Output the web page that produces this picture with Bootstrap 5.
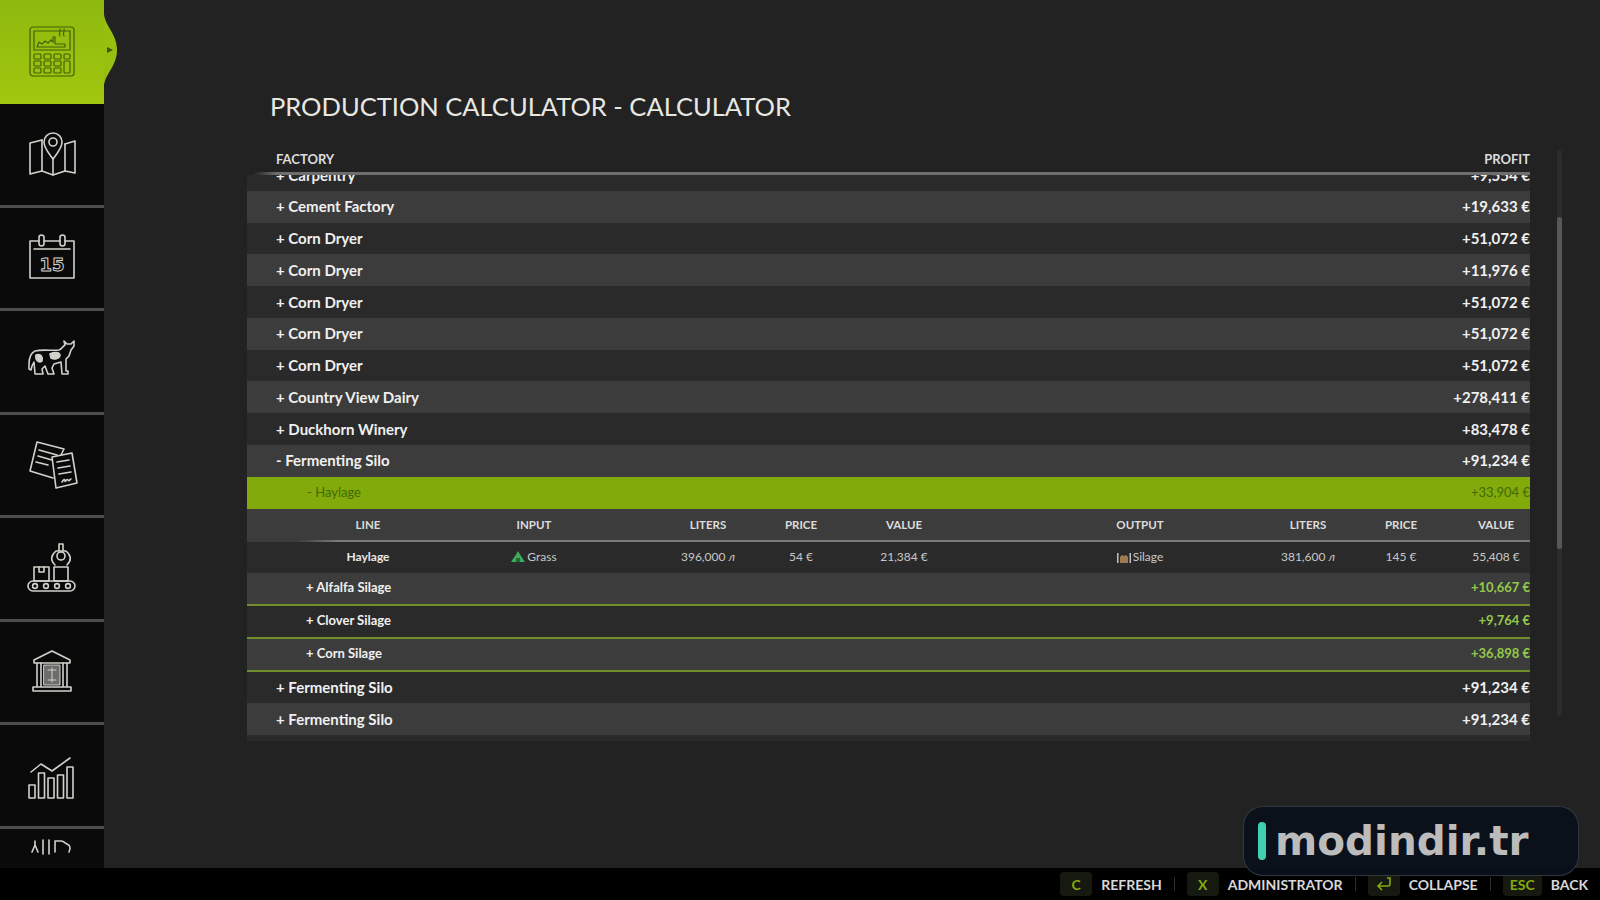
<!DOCTYPE html>
<html lang="en">
  <head>
    <meta charset="UTF-8" />
    <title>Production Calculator</title>
    <link rel="stylesheet" href="https://cdn.jsdelivr.net/npm/bootstrap@5.3.0/dist/css/bootstrap.min.css" />
    <style>
      body {
        height: 100vh;
        background: #222222;
        font-family: "Lato", "Liberation Sans", sans-serif;
        color: #eeeeee;
      }

      .side-menu { width: 104px; background: #0a0a0a; }
      .side-item { height: 103.5px; border-bottom: 3px solid #4d4d4d; }
      .side-item svg { width: 52px; height: 52px; fill: none; stroke: #d2d2cc; stroke-width: 1.6; stroke-linejoin: round; stroke-linecap: round; }
      .side-active { height: 104px; background: linear-gradient(180deg, #8db80e, #a2c70f); border-bottom: 0; }
      .side-active svg.calc-icon { stroke: #41610a; stroke-width: 1.2; }
      .side-notch { position: absolute; left: 104px; top: 14px; width: 14px; height: 72px; }
      .side-last { height: 60px; border-bottom: 0; padding-top: 9px; }

      .page-title { font-size: 25.5px; font-weight: 400; color: #e8e8e2; padding: 90px 0 0 23px; margin: 0 0 24px; line-height: 33px; }

      .calc-panel { width: 1283px; }
      .calc-head { padding: 0 0 0 29px; height: 25px; font-size: 13px; font-weight: 700; color: #dddddd; }
      .fade-line { height: 3px; background: linear-gradient(90deg, transparent 6px, #6e6e6e 30px, #6e6e6e 100%); }
      .calc-list { height: 566px; }
      .calc-inner { margin-top: -16px; }

      .calc-row { height: 31.75px; padding-left: 29px; font-size: 15px; font-weight: 700; color: #f0f0f0; }
      .row-light { background: #3c3c3c; }
      .row-dark { background: #2a2a2a; }
      .row-active { background: #82aa0a; color: #3f6a05; font-size: 13px; font-weight: 400; padding-left: 60px; height: 32px; }
      .row-sub { padding-left: 59px; font-size: 13px; height: 31px; }
      .row-sub .amount { color: #93c94a; }
      .row-ruled { height: 33px; border-bottom: 2px solid #708f2a; }
      .row-tail { height: 12px; }

      .cells { height: 31px; font-size: 12px; }
      .cells > div { text-align: center; flex: none; }
      .cells-head { height: 33px; font-size: 11.5px; font-weight: 700; color: #dcdcdc; background-image: linear-gradient(90deg, transparent 50px, #7a7a7a 90px, #7a7a7a 100%); background-size: 100% 2px; background-position: bottom; background-repeat: no-repeat; }
      .cells-body { color: #c8c8c8; }
      .cells-body > div:first-child { color: #e8e8e8; font-weight: 700; }
      .col-line { width: 120px; margin-left: 61px; }
      .col-input { width: 150px; margin-left: 31px; }
      .col-liters { width: 90px; margin-left: 54px; }
      .col-price { width: 70px; margin-left: 13px; }
      .col-value { width: 90px; margin-left: 23px; }
      .col-output { width: 150px; margin-left: 116px; }
      .col-liters2 { width: 90px; margin-left: 48px; }
      .col-price2 { width: 70px; margin-left: 13px; }
      .col-value2 { width: 68px; margin-left: 26px; }
      .good-icon { width: 14px; height: 14px; margin-right: 2px; vertical-align: -3px; }

      .scroll-track { width: 5px; height: 566px; margin: 3px 0 0 27px; background: #2c2c2c; border-radius: 3px; }
      .scroll-thumb { height: 332px; margin-top: 67px; background: #585858; border-radius: 3px; }

      .key-bar { height: 32px; background: #000000; padding-right: 12px; font-size: 14px; font-weight: 700; color: #d8d8d8; }
      .key-cap { height: 24px; min-width: 32px; padding: 0 7px; margin-right: 9px; background: #15190f; border-radius: 4px; color: #85aa10; font-size: 14px; }
      .key-gap { width: 1px; height: 14px; margin: 0 12px; background: #2d2d2d; }

      .site-mark { position: absolute; left: 1243px; top: 806px; width: 336px; height: 70px; background: rgba(10, 16, 26, 0.93); border: 1px solid rgba(255, 255, 255, 0.16); border-radius: 20px; padding-left: 14px; gap: 9px; }
      .site-bar { width: 8px; height: 38px; background: #3fd0b0; border-radius: 4px; }
      .site-text { font-family: "DejaVu Sans", sans-serif; font-size: 40.5px; font-weight: 700; color: #bcbcbc; line-height: 1; }
    </style>
  </head>
  <body class="d-flex flex-column overflow-hidden position-relative">
    <div class="d-flex flex-grow-1 overflow-hidden">
      <nav class="side-menu flex-shrink-0 overflow-hidden">
        <div class="side-item side-active d-flex align-items-center justify-content-center">
          <svg class="calc-icon" viewBox="0 0 52 52">
            <rect x="4" y="1" width="44" height="49" rx="3" />
            <rect x="8" y="5" width="36" height="19" />
            <path d="M11 21l2-5 3 2 3-3 3 2 3-3 2 2v-5h2v7h10v3z" />
            <path d="M34 10c-2-3 1-4 0-7M38 10c-2-3 1-4 0-7" />
            <rect x="8" y="28" width="7" height="5" rx="1" /><rect x="18" y="28" width="7" height="5" rx="1" /><rect x="28" y="28" width="7" height="5" rx="1" /><rect x="38" y="28" width="6" height="5" rx="1" />
            <rect x="8" y="35" width="7" height="5" rx="1" /><rect x="18" y="35" width="7" height="5" rx="1" /><rect x="28" y="35" width="7" height="5" rx="1" />
            <rect x="8" y="42" width="7" height="5" rx="1" /><rect x="18" y="42" width="7" height="5" rx="1" /><rect x="28" y="42" width="7" height="5" rx="1" /><rect x="38" y="35" width="6" height="12" rx="1" />
          </svg>
        </div>
        <div class="side-item d-flex align-items-center justify-content-center">
          <svg viewBox="0 0 52 52">
            <path d="M16 12L4 15v31l12-3 11 4 12-4 10 2V13l-10 3" />
            <path d="M16 12v31M27 30v17M39 16v27" />
            <path d="M27 31c-5-7-9-11-9-17a9 9 0 0 1 18 0c0 6-4 10-9 17z" />
            <circle cx="27" cy="14" r="4" />
          </svg>
        </div>
        <div class="side-item d-flex align-items-center justify-content-center">
          <svg viewBox="0 0 52 52">
            <path d="M13 9H4v37h44V9h-9M18 9h16" />
            <rect x="13" y="3" width="5" height="11" rx="2.5" /><rect x="34" y="3" width="5" height="11" rx="2.5" />
            <path d="M8 17h36" />
            <text x="26" y="39" text-anchor="middle" font-family="DejaVu Sans" font-size="18" font-weight="700" stroke-width="1">15</text>
          </svg>
        </div>
        <div class="side-item d-flex align-items-center justify-content-center">
          <svg viewBox="0 0 52 52">
            <path d="M3 30c0-6 1-12 6-14 8-2 17 0 24-1 3-1 4-4 6-5l-1-4 3 3h4l3-3v5l-3 4-2 6-3 3v12h2v3h-6l-1-12-7 2-2 4 2 6h-6l-3-8-3 3 1 5H9l-1-12-2 4-1 4-2-1z" />
            <path d="M10 20c5-2 7 2 6 6-3 2-7 0-6-6zM24 19c4-2 9-2 10 1 0 3-5 5-9 3z" fill="#d2d2cc" />
          </svg>
        </div>
        <div class="side-item d-flex align-items-center justify-content-center">
          <svg viewBox="0 0 52 52">
            <path d="M11 3l27 7-3 6M27 39L4 32 11 3" />
            <path d="M13 11l18 5M12 17l14 4M10 23l12 3" />
            <path d="M26 18l20-4 5 30-21 5z" fill="#0a0a0a" />
            <path d="M31 23l12-2M32 29l12-2M33 35l12-2M36 43c2-3 3-3 3-1s2-3 3-1 2-1 3-1" />
          </svg>
        </div>
        <div class="side-item d-flex align-items-center justify-content-center">
          <svg viewBox="0 0 52 52">
            <rect x="2" y="39" width="47" height="10" rx="5" />
            <circle cx="9" cy="44" r="2.4" /><circle cx="20" cy="44" r="2.4" /><circle cx="31" cy="44" r="2.4" /><circle cx="42" cy="44" r="2.4" />
            <rect x="8" y="25" width="15" height="14" /><path d="M13 25v5h5v-5" />
            <rect x="28" y="25" width="14" height="14" />
            <path d="M33 2h4v7h-4zM29 23c-5-5-4-10 1-14h10c5 4 6 9 1 14" />
            <circle cx="35" cy="14" r="4" />
          </svg>
        </div>
        <div class="side-item d-flex align-items-center justify-content-center">
          <svg viewBox="0 0 52 52">
            <path d="M8 14L26 5l18 9v3H8z" />
            <path d="M11 17v24M15 17v24M37 17v24M41 17v24M7 45h38v-4H7z" />
            <rect x="18" y="19" width="16" height="20" fill="#6c6c6c" stroke-width="1" />
            <path d="M22 24h8M22 34h8M26 22v14" stroke-width="1" />
          </svg>
        </div>
        <div class="side-item d-flex align-items-center justify-content-center">
          <svg viewBox="0 0 52 52">
            <path d="M5 23L15 15l11 7 18-13" />
            <rect x="3" y="36" width="6" height="13" /><rect x="12.500" y="24" width="6" height="25" /><rect x="22" y="29" width="6" height="20" /><rect x="31.500" y="26" width="6" height="23" /><rect x="41" y="18" width="6" height="31" />
          </svg>
        </div>
        <div class="side-item side-last d-flex justify-content-center">
          <svg viewBox="0 0 52 52">
            <path d="M6 14l3-7 3 7M9 7V3M17 2v14M23 2v14M29 14V3h6c3 0 4 2 6 3 3 1 4 4 2 8" />
          </svg>
        </div>
      </nav>
      <svg class="side-notch" viewBox="0 0 14 72">
        <path d="M0 0c1 12 13 20 13 36S1 60 0 72z" fill="#97bf0f" />
        <path d="M3 33l6 3-6 3z" fill="#3a5a08" />
      </svg>

      <main class="flex-grow-1 ps-0" style="padding-left: 0">
        <div class="calc-wrap">
          <h1 class="page-title text-uppercase calc-offset">Production Calculator - Calculator</h1>
          <div class="d-flex calc-offset">
            <div class="calc-panel">
              <div class="calc-head d-flex justify-content-between align-items-center text-uppercase">
                <span>Factory</span><span>Profit</span>
              </div>
              <div class="fade-line"></div>
              <div class="calc-list overflow-hidden">
                <div class="calc-inner">
                  <div class="calc-row row-dark d-flex justify-content-between align-items-center"><span>+ Carpentry</span><span class="amount">+9,554 €</span></div>
                  <div class="calc-row row-light d-flex justify-content-between align-items-center"><span>+ Cement Factory</span><span class="amount">+19,633 €</span></div>
                  <div class="calc-row row-dark d-flex justify-content-between align-items-center"><span>+ Corn Dryer</span><span class="amount">+51,072 €</span></div>
                  <div class="calc-row row-light d-flex justify-content-between align-items-center"><span>+ Corn Dryer</span><span class="amount">+11,976 €</span></div>
                  <div class="calc-row row-dark d-flex justify-content-between align-items-center"><span>+ Corn Dryer</span><span class="amount">+51,072 €</span></div>
                  <div class="calc-row row-light d-flex justify-content-between align-items-center"><span>+ Corn Dryer</span><span class="amount">+51,072 €</span></div>
                  <div class="calc-row row-dark d-flex justify-content-between align-items-center"><span>+ Corn Dryer</span><span class="amount">+51,072 €</span></div>
                  <div class="calc-row row-light d-flex justify-content-between align-items-center"><span>+ Country View Dairy</span><span class="amount">+278,411 €</span></div>
                  <div class="calc-row row-dark d-flex justify-content-between align-items-center"><span>+ Duckhorn Winery</span><span class="amount">+83,478 €</span></div>
                  <div class="calc-row row-light d-flex justify-content-between align-items-center"><span>- Fermenting Silo</span><span class="amount">+91,234 €</span></div>
                  <div class="calc-row row-active d-flex justify-content-between align-items-center"><span>- Haylage</span><span>+33,904 €</span></div>
                  <div class="cells cells-head row-light d-flex align-items-center text-uppercase">
                    <div class="col-line">Line</div><div class="col-input">Input</div><div class="col-liters">Liters</div><div class="col-price">Price</div><div class="col-value">Value</div><div class="col-output">Output</div><div class="col-liters2">Liters</div><div class="col-price2">Price</div><div class="col-value2">Value</div>
                  </div>
                  <div class="cells cells-body row-dark d-flex align-items-center">
                    <div class="col-line">Haylage</div>
                    <div class="col-input">
                      <svg class="good-icon" viewBox="0 0 14 14"><path d="M7 1l3 5 4 6H0l4-6z" fill="#3fa95c" /><path d="M5 8h4v4H5z" fill="#1f6a38" /></svg>Grass
                    </div>
                    <div class="col-liters">396,000 <i>л</i></div><div class="col-price">54 €</div><div class="col-value">21,384 €</div>
                    <div class="col-output">
                      <svg class="good-icon" viewBox="0 0 14 14"><path d="M0 3h1.500v10H0zM12.500 3H14v10h-1.500z" fill="#c0c0c0" /><path d="M3 7l2-2 2 1 2-1 2 2v6H3z" fill="#a07a52" /></svg>Silage
                    </div>
                    <div class="col-liters2">381,600 <i>л</i></div><div class="col-price2">145 €</div><div class="col-value2">55,408 €</div>
                  </div>
                  <div class="calc-row row-sub row-ruled row-light d-flex justify-content-between align-items-center"><span>+ Alfalfa Silage</span><span class="amount">+10,667 €</span></div>
                  <div class="calc-row row-sub row-ruled row-dark d-flex justify-content-between align-items-center"><span>+ Clover Silage</span><span class="amount">+9,764 €</span></div>
                  <div class="calc-row row-sub row-ruled row-light d-flex justify-content-between align-items-center"><span>+ Corn Silage</span><span class="amount">+36,898 €</span></div>
                  <div class="calc-row row-dark d-flex justify-content-between align-items-center"><span>+ Fermenting Silo</span><span class="amount">+91,234 €</span></div>
                  <div class="calc-row row-light d-flex justify-content-between align-items-center"><span>+ Fermenting Silo</span><span class="amount">+91,234 €</span></div>
                  <div class="row-dark row-tail"></div>
                </div>
              </div>
            </div>
            <div class="scroll-track"><div class="scroll-thumb"></div></div>
          </div>
        </div>
      </main>
    </div>

    <footer class="key-bar d-flex align-items-center justify-content-end flex-shrink-0 text-uppercase">
      <span class="key-cap d-inline-flex align-items-center justify-content-center">C</span><span>Refresh</span><span class="key-gap"></span>
      <span class="key-cap d-inline-flex align-items-center justify-content-center">X</span><span>Administrator</span><span class="key-gap"></span>
      <span class="key-cap d-inline-flex align-items-center justify-content-center">
        <svg width="18" height="16" viewBox="0 0 18 16" fill="none" stroke="#85aa10" stroke-width="1.6"><path d="M12 2h3v6a2 2 0 0 1-2 2H4M7 6l-4 4 4 4" /></svg>
      </span><span>Collapse</span><span class="key-gap"></span>
      <span class="key-cap d-inline-flex align-items-center justify-content-center">Esc</span><span>Back</span>
    </footer>

    <div class="site-mark d-flex align-items-center">
      <span class="site-bar"></span><span class="site-text">modindir.tr</span>
    </div>

    <script src="https://cdn.jsdelivr.net/npm/bootstrap@5.3.0/dist/js/bootstrap.bundle.min.js"></script>
    <style>
      .calc-offset { margin-left: 143px; }
      .page-title.calc-offset { margin-left: 143px; }
    </style>
  </body>
</html>
